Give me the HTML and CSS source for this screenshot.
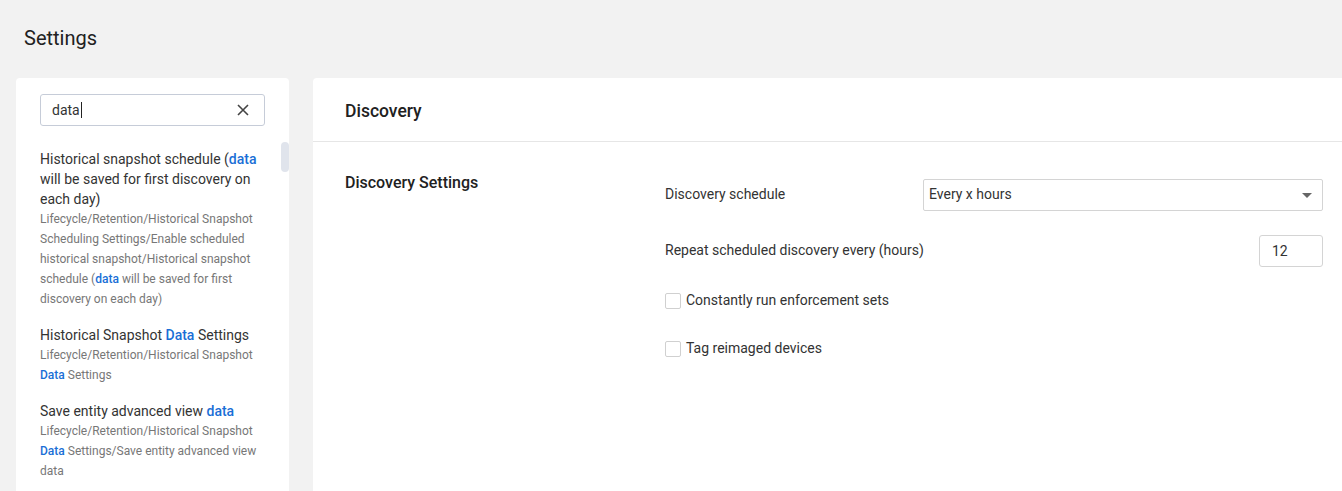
FILE: index.html
```html
<!DOCTYPE html>
<html>
<head>
<meta charset="utf-8">
<link rel="stylesheet" href="styles.css">
</head>
<body>
<div class="page">
  <h1 class="page-title">Settings</h1>
  <div class="layout">
    <aside class="sidebar">
      <div class="search">
        <span class="search-text">data</span><span class="caret"></span>
        <svg class="clear" width="12" height="12" viewBox="0 0 12 12"><path d="M1 1L11 11M11 1L1 11" stroke="#444" stroke-width="1.6" fill="none"/></svg>
      </div>
      <div class="results">
        <div class="result">
          <div class="r-title">Historical snapshot schedule (<b>data</b> will be saved for first discovery on each day)</div>
          <div class="r-path">Lifecycle/Retention/Historical Snapshot Scheduling Settings/Enable scheduled historical snapshot/Historical snapshot schedule (<b>data</b> will be saved for first discovery on each day)</div>
        </div>
        <div class="result">
          <div class="r-title">Historical Snapshot <b>Data</b> Settings</div>
          <div class="r-path">Lifecycle/Retention/Historical Snapshot <b>Data</b> Settings</div>
        </div>
        <div class="result">
          <div class="r-title">Save entity advanced view <b>data</b></div>
          <div class="r-path">Lifecycle/Retention/Historical Snapshot <b>Data</b> Settings/Save entity advanced view data</div>
        </div>
      </div>
      <div class="thumb"></div>
    </aside>
    <main class="content">
      <div class="content-header">Discovery</div>
      <div class="section">
        <div class="section-title">Discovery Settings</div>
        <div class="form">
          <div class="row">
            <span class="label row-label">Discovery schedule</span>
            <div class="select">
              <span>Every x hours</span>
              <span class="arrow"></span>
            </div>
          </div>
          <div class="row">
            <span class="label row-label">Repeat scheduled discovery every (hours)</span>
            <div class="number">12</div>
          </div>
          <div class="check-row">
            <span class="box"></span><span class="label">Constantly run enforcement sets</span>
          </div>
          <div class="check-row">
            <span class="box"></span><span class="label">Tag reimaged devices</span>
          </div>
        </div>
      </div>
    </main>
  </div>
</div>
</body>
</html>
```

FILE: styles.css
```css
* { box-sizing: border-box; }
html, body { margin: 0; padding: 0; height: 100%; overflow: hidden; }
body {
  background: #f2f2f2;
  font-family: Roboto, "Liberation Sans", Arial, sans-serif;
  color: #333;
}
.page { padding: 0 0 0 16px; height: 100%; display: flex; flex-direction: column; }
.page-title {
  margin: 0;
  padding: 25px 0 0 8px;
  height: 78px;
  font-size: 20px;
  font-weight: 400;
  line-height: 26px;
  color: #212121;
}
.layout { display: flex; gap: 24px; flex: 1; min-height: 0; }
.sidebar {
  position: relative;
  width: 273px;
  flex: none;
  background: #fff;
  border-radius: 4px 4px 0 0;
  padding: 16px 24px 0 24px;
  overflow: hidden;
}
.search {
  height: 32px;
  border: 1px solid #c6ccd8;
  border-radius: 3px;
  display: flex;
  align-items: center;
  padding: 0 15px 0 11px;
  font-size: 14px;
  color: #333;
}
.search-text { line-height: 20px; }
.caret { width: 1px; height: 16px; background: #222; margin-left: 1px; }
.clear { margin-left: auto; }
.results { padding-top: 23px; }
.result { margin-bottom: 16px; }
.r-title { font-size: 14px; line-height: 20px; color: #333; }
.r-path { font-size: 12px; line-height: 20px; color: #777; }
.result b { font-weight: 500; color: #1a6fd6; }
.thumb {
  position: absolute;
  right: 0;
  top: 64px;
  width: 8px;
  height: 30px;
  border-radius: 4px;
  background: #e0e4ec;
}
.content {
  flex: 1;
  background: #fff;
  border-radius: 4px 0 0 0;
  min-width: 0;
}
.content-header {
  height: 64px;
  padding: 21px 32px 0;
  font-size: 17.5px;
  font-weight: 500;
  line-height: 24px;
  color: #212121;
  border-bottom: 1px solid #e6e6e6;
}
.section {
  display: flex;
  padding: 29px 19px 0 32px;
}
.section-title {
  width: 320px;
  flex: none;
  padding-top: 1px;
  font-size: 16px;
  font-weight: 500;
  line-height: 22px;
  color: #212121;
}
.form { flex: 1; padding-top: 8px; }
.label { font-size: 14px; line-height: 20px; color: #333; }
.row-label { margin-bottom: 2px; }
.row {
  display: flex;
  align-items: center;
  justify-content: space-between;
  margin-bottom: 24px;
}
.select {
  width: 400px;
  height: 32px;
  border: 1px solid #d4d4d4;
  border-radius: 2px;
  display: flex;
  align-items: center;
  justify-content: space-between;
  padding: 0 10px 2px 5px;
  font-size: 14px;
  color: #333;
}
.arrow {
  width: 0; height: 0;
  border-left: 5px solid transparent;
  border-right: 5px solid transparent;
  border-top: 5px solid #666;
  margin-top: 2px;
}
.number {
  width: 64px;
  height: 32px;
  border: 1px solid #d4d4d4;
  border-radius: 3px;
  display: flex;
  align-items: center;
  padding-left: 12px;
  font-size: 14px;
  color: #333;
}
.check-row {
  display: flex;
  align-items: center;
  gap: 5px;
  margin-top: -1px;
  margin-bottom: 29px;
}
.box {
  width: 16px;
  height: 16px;
  border: 1px solid #d0d0d0;
  border-radius: 2px;
  margin-top: 2px;
}
```
